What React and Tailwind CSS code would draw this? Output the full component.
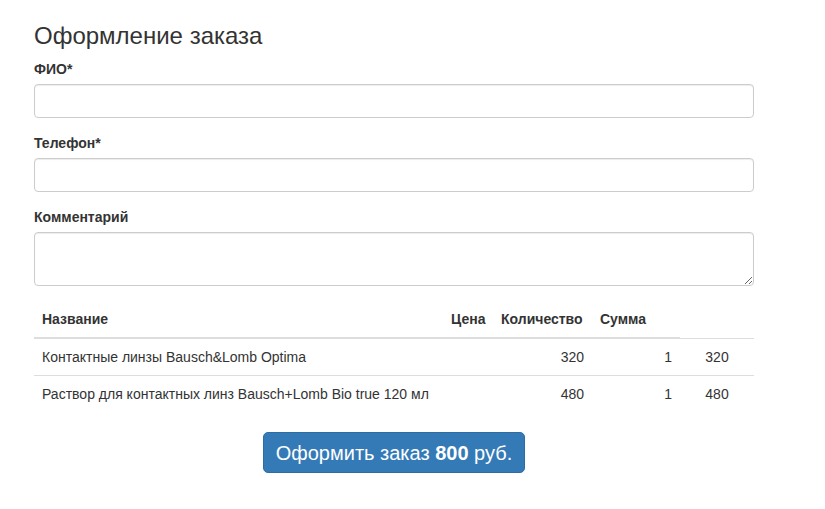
export default function App() {
  const font = { fontFamily: '"Liberation Sans", Arial, sans-serif' };
  const inputCls =
    "block w-full h-[34px] rounded-[4px] border border-[#ccc] bg-white px-3 text-[14px] shadow-[inset_0_1px_1px_rgba(0,0,0,0.075)] outline-none";
  const rows = [
    { name: "Контактные линзы Bausch&Lomb Optima", price: 320, qty: 1, sum: 320 },
    { name: "Раствор для контактных линз Bausch+Lomb Bio true 120 мл", price: 480, qty: 1, sum: 480 },
  ];
  return (
    <div className="min-h-[509px] bg-white text-[#333] text-[14px] leading-[20px]" style={font}>
      <div className="ml-[34px] w-[720px] pt-[23px]">
        <h3 className="text-[24px] leading-[26px] font-normal mb-[10px]">Оформление заказа</h3>
        <div className="mb-[15px]">
          <label className="block font-bold mb-[5px]">ФИО*</label>
          <input className={inputCls} />
        </div>
        <div className="mb-[15px]">
          <label className="block font-bold mb-[5px]">Телефон*</label>
          <input className={inputCls} />
        </div>
        <div className="mb-[15px]">
          <label className="block font-bold mb-[5px]">Комментарий</label>
          <textarea
            rows={2}
            className="block w-full h-[54px] rounded-[4px] border border-[#ccc] bg-white px-3 py-[6px] text-[14px] shadow-[inset_0_1px_1px_rgba(0,0,0,0.075)] outline-none"
          />
        </div>
        <table className="w-[720px] table-fixed border-collapse">
          <colgroup>
            <col className="w-[409px]" />
            <col className="w-[50px]" />
            <col className="w-[99px]" />
            <col className="w-[88px]" />
            <col className="w-[74px]" />
          </colgroup>
          <thead>
            <tr>
              <th className="p-2 text-left font-bold border-b-2 border-[#ddd]">Название</th>
              <th className="p-2 text-left font-bold border-b-2 border-[#ddd]">Цена</th>
              <th className="p-2 text-left font-bold border-b-2 border-[#ddd]">Количество</th>
              <th className="p-2 text-left font-bold border-b-2 border-[#ddd]">Сумма</th>
            </tr>
          </thead>
          <tbody>
            {rows.map((r, i) => (
              <tr key={i}>
                <td className="p-2 border-t border-[#ddd] whitespace-nowrap">{r.name}</td>
                <td className="p-2 border-t border-[#ddd]"></td>
                <td className="p-2 border-t border-[#ddd] text-right">{r.price}</td>
                <td className="p-2 border-t border-[#ddd] text-right">{r.qty}</td>
                <td className="p-2 border-t border-[#ddd] text-center">{r.sum}</td>
              </tr>
            ))}
          </tbody>
        </table>
        <div className="flex justify-center mt-[20px]">
          <button className="h-[41px] px-[12px] rounded-[5px] bg-[#337ab7] border border-[#2e6da4] text-white text-[20px] leading-[24px]">
            Оформить заказ <b>800</b> руб.
          </button>
        </div>
      </div>
    </div>
  );
}
